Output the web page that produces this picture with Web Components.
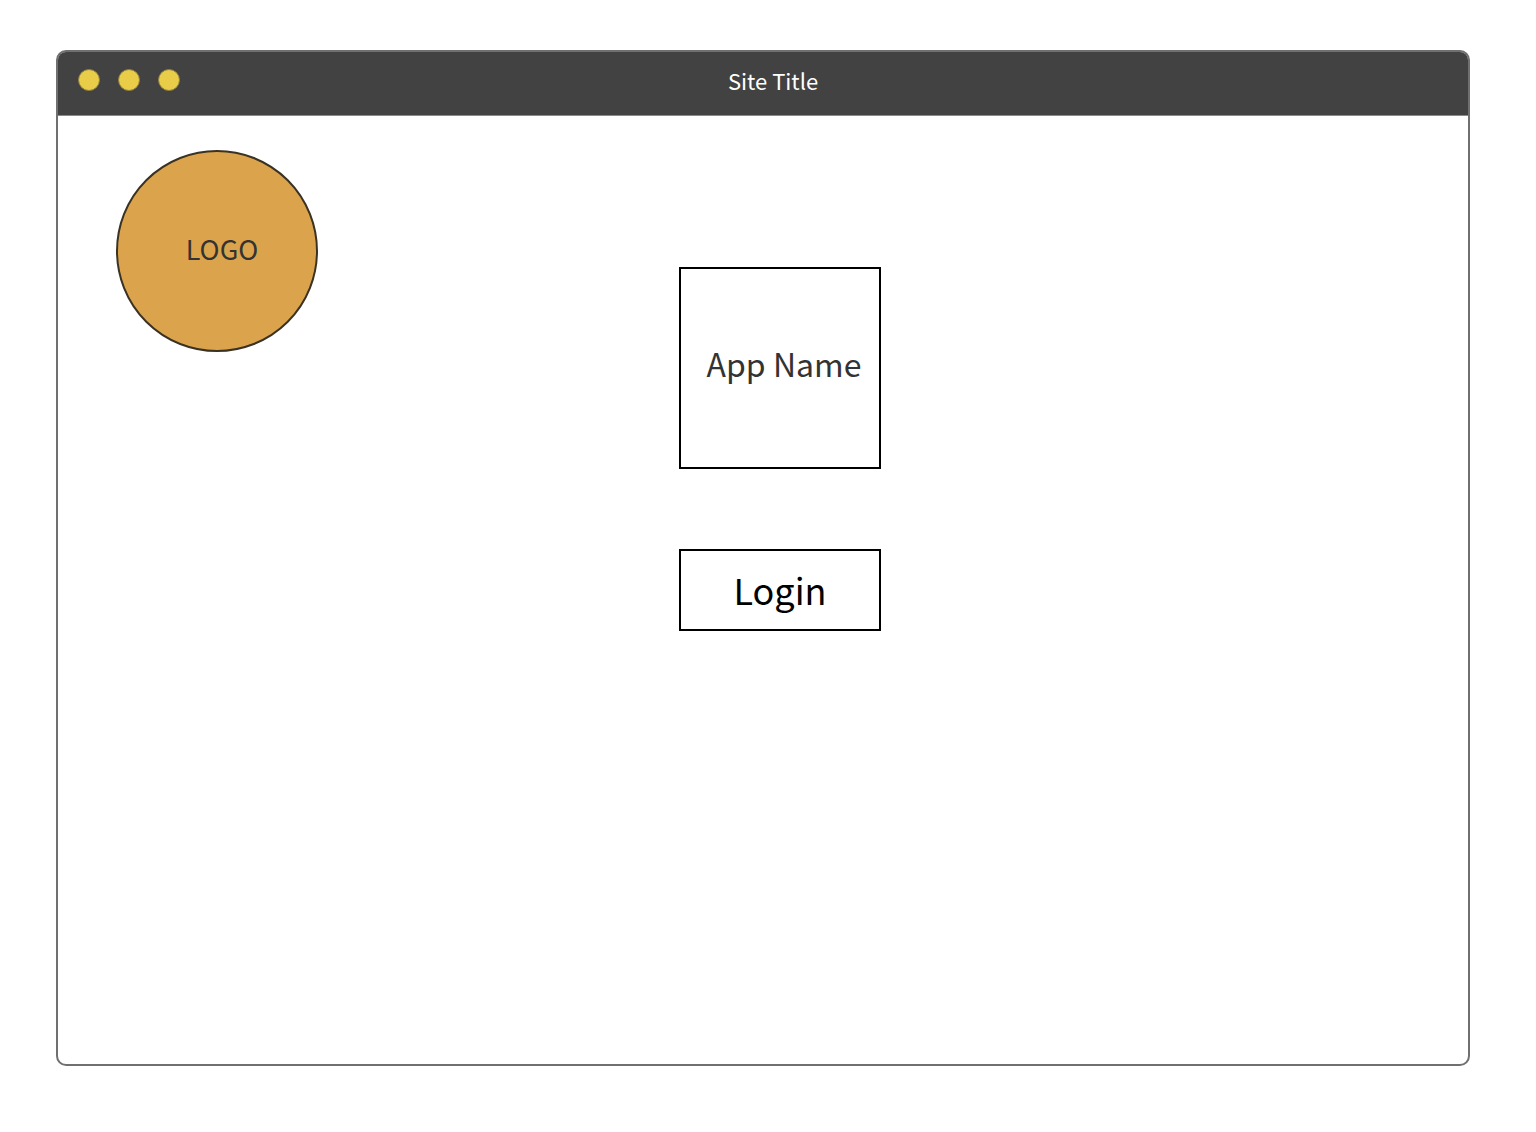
<!DOCTYPE html>
<html lang="en">
<head>
<meta charset="utf-8">
<title>Site Title</title>
<style>
  html, body { height: 100%; }
  body {
    margin: 0;
    box-sizing: border-box;
    padding: 50px 66px 66px 56px;
    background: #fff;
    color: #333;
    font-family: "Noto Sans CJK SC", "Noto Sans", sans-serif;
  }
</style>
</head>
<body>
<browser-window>
  <title-bar slot="bar">Site Title</title-bar>
  <landing-view>
    <logo-badge slot="logo">LOGO</logo-badge>
    <app-card>App Name</app-card>
    <login-button>Login</login-button>
  </landing-view>
</browser-window>
<script>
const define = (name, html) => {
  const template = document.createElement("template");
  template.innerHTML = html;
  customElements.define(name, class extends HTMLElement {
    constructor() {
      super();
      this.attachShadow({ mode: "open" }).append(template.content.cloneNode(true));
    }
  });
};

define("browser-window", `
  <style>
    :host {
      display: flex; flex-direction: column;
      box-sizing: border-box; min-height: 100%;
      border: 2px solid #707070; border-radius: 10px;
      overflow: hidden; background: #fff;
    }
    main { flex: 1; }
  </style>
  <slot name="bar"></slot>
  <main><slot></slot></main>`);

define("title-bar", `
  <style>
    :host { display: block; background: #424242; border-bottom: 1px solid #8a8a8a; }
    header {
      display: grid; grid-template-columns: 1fr auto 1fr; align-items: start;
      padding: 17px 0 24px 20px;
    }
    .dots { display: flex; gap: 18px; }
    i {
      box-sizing: border-box; width: 22px; height: 22px;
      border: 1px solid #8f8040; border-radius: 50%; background: #e9cc47;
    }
    h1 { margin: 0; color: #fff; font-size: 22px; line-height: 22px; font-weight: 400; }
  </style>
  <header>
    <div class="dots" aria-hidden="true"><i></i><i></i><i></i></div>
    <h1><slot></slot></h1>
  </header>`);

define("landing-view", `
  <style>
    :host {
      display: grid; grid-template-columns: 1fr auto 1fr; align-items: start;
      padding: 34px 24px 34px 58px;
    }
    .stack { display: flex; flex-direction: column; gap: 80px; padding-top: 117px; }
  </style>
  <div><slot name="logo"></slot></div>
  <div class="stack"><slot></slot></div>`);

define("logo-badge", `
  <style>
    :host {
      display: flex; align-items: center; justify-content: center;
      box-sizing: border-box; width: 202px; height: 202px; padding: 0 0 4px 10px;
      border: 2px solid #3a3223; border-radius: 50%; background: #dba44c;
      font-size: 27px; line-height: 40px;
    }
  </style>
  <slot></slot>`);

define("app-card", `
  <style>
    :host {
      display: flex; align-items: center; justify-content: center;
      box-sizing: border-box; width: 202px; height: 202px; padding: 0 0 10px 8px;
      border: 2px solid #000;
    }
    h2 { margin: 0; font-size: 32px; line-height: 48px; font-weight: 400; white-space: nowrap; }
  </style>
  <h2><slot></slot></h2>`);

define("login-button", `
  <style>
    :host { display: block; }
    button {
      display: block; width: 202px; height: 82px; padding: 0 0 2px;
      border: 2px solid #000; border-radius: 0; background: #fff; color: #000;
      font: inherit; font-size: 36px; line-height: 52px; cursor: pointer;
    }
  </style>
  <button type="button"><slot></slot></button>`);
</script>
</body>
</html>
